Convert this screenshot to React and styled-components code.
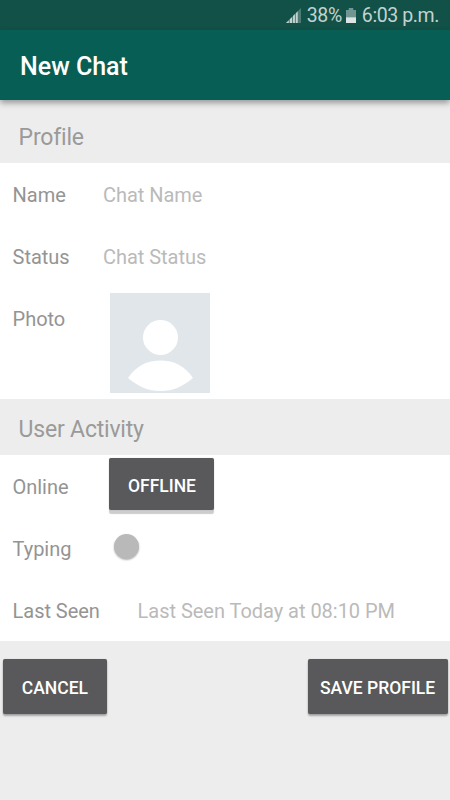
import React, { useState } from 'react';
import styled, { createGlobalStyle } from 'styled-components';

const GlobalStyle = createGlobalStyle`
  * {
    box-sizing: border-box;
  }
  body {
    margin: 0;
    background: #ededed;
    font-family: Roboto, sans-serif;
  }
`;

const Screen = styled.div`
  display: flex;
  flex-direction: column;
  height: 800px;
  background: #ededed;
  overflow: hidden;
`;

const StatusBar = styled.div`
  display: flex;
  flex: none;
  align-items: center;
  justify-content: flex-end;
  height: 30px;
  padding: 1px 11px 0 0;
  background: #125147;
  color: #c3d3d0;
  font-size: 19.5px;
  letter-spacing: -0.4px;
  line-height: 30px;
`;

const SignalIcon = styled.svg`
  width: 15px;
  height: 15px;
  margin-right: 6px;
`;

const BatteryIcon = styled.svg`
  width: 10px;
  height: 15px;
  margin: 0 6px 0 4px;
`;

const Toolbar = styled.header`
  position: relative;
  display: flex;
  flex: none;
  align-items: center;
  height: 70px;
  padding: 3px 20px 0;
  background: #075e54;
  box-shadow: 0 3px 6px rgba(0, 0, 0, 0.36);
  color: #fff;
  font-size: 25px;
  font-weight: 500;
`;

const SectionTitle = styled.h2`
  display: flex;
  flex: none;
  align-items: center;
  height: ${props => props.$height}px;
  margin: 0;
  padding: ${props => props.$top}px 0 0 18.6px;
  color: #9a9a9a;
  font-size: 23px;
  font-weight: 400;
  letter-spacing: -0.2px;
`;

const Panel = styled.section`
  flex: none;
  height: ${props => props.$height}px;
  padding-top: 1px;
  background: #fff;
`;

const Row = styled.div`
  display: flex;
  height: 62px;
`;

const Label = styled.label`
  flex: none;
  width: ${props => props.$width || 90.4}px;
  margin-left: 12.6px;
  color: #949494;
  font-size: 20px;
  letter-spacing: -0.05px;
  line-height: 62px;
`;

const Input = styled.input`
  flex: 1;
  min-width: 0;
  padding: 0;
  border: 0;
  outline: 0;
  background: transparent;
  color: #949494;
  font-family: inherit;
  font-size: 20px;
  letter-spacing: -0.03px;

  &::placeholder {
    color: #bababa;
    opacity: 1;
  }
`;

const Avatar = styled.svg`
  width: 100px;
  height: 100px;
  margin: 5px 0 0 7px;
`;

const Button = styled.button`
  width: ${props => props.$width}px;
  height: ${props => props.$height || 55}px;
  padding: 2px 0 0;
  border: 0;
  border-radius: 2px;
  background: #59595b;
  box-shadow: 0 2px 2px rgba(0, 0, 0, 0.3), 0 0 1px rgba(0, 0, 0, 0.3);
  color: #fff;
  font-family: inherit;
  font-size: 17.5px;
  font-weight: 500;
  white-space: nowrap;
`;

const OnlineButton = styled(Button)`
  margin: 2px 0 0 6.5px;
  padding-top: 4px;
  box-shadow: 0 4px 1px rgba(0, 0, 0, 0.2), 0 0 1px rgba(0, 0, 0, 0.3);
`;

const Toggle = styled.button`
  width: 25px;
  height: 25px;
  margin: 16px 0 0 10.8px;
  padding: 0;
  border: 0;
  border-radius: 50%;
  background: #b9b9b9;
  box-shadow: 0 1px 2px rgba(0, 0, 0, 0.3);
`;

const Actions = styled.footer`
  display: flex;
  justify-content: space-between;
  padding: 18.4px 2.5px 0;
`;

export default function App() {
  const [name, setName] = useState('');
  const [status, setStatus] = useState('');
  const [lastSeen, setLastSeen] = useState('');
  const [online, setOnline] = useState(false);

  return (
    <Screen>
      <GlobalStyle />
      <StatusBar>
        <SignalIcon viewBox="0 0 16 16">
          <path d="M0 16 L16 0 V16 Z" fill="#4c7c74" />
          <path d="M0 16 L3 13 V16 Z M4 16 V12 L6.500 9.500 V16 Z M7.500 16 V8.500 L9.500 6.500 V16 Z M10.500 16 V5.500 L12.500 3.500 V16 Z" fill="#c3d3d0" />
        </SignalIcon>
        <span>38%</span>
        <BatteryIcon viewBox="0 0 11 16" preserveAspectRatio="none">
          <path d="M3 0 H8 V2 H11 V16 H0 V2 H3 Z" fill="#6f9690" />
          <path d="M0 10 H11 V16 H0 Z" fill="#dde5e4" />
        </BatteryIcon>
        <span>6:03 p.m.</span>
      </StatusBar>
      <Toolbar>New Chat</Toolbar>

      <SectionTitle $height={63} $top={11}>Profile</SectionTitle>
      <Panel $height={236.4}>
        <Row>
          <Label htmlFor="name">Name</Label>
          <Input id="name" placeholder="Chat Name" value={name} onChange={e => setName(e.target.value)} />
        </Row>
        <Row>
          <Label htmlFor="status">Status</Label>
          <Input id="status" placeholder="Chat Status" value={status} onChange={e => setStatus(e.target.value)} />
        </Row>
        <Row>
          <Label as="span">Photo</Label>
          <Avatar viewBox="0 0 100 100">
            <rect width="100" height="100" fill="#e0e6e9" />
            <circle cx="50.5" cy="44.5" r="17.5" fill="#fff" />
            <path d="M18 85 C26 73 37 67.5 50.5 67.5 C64 67.5 75 73 83 85 C73 93.500 63 98 50.500 98 C38 98 28 93.500 18 85 Z" fill="#fff" />
          </Avatar>
        </Row>
      </Panel>

      <SectionTitle $height={55.6} $top={4}>User Activity</SectionTitle>
      <Panel $height={186}>
        <Row>
          <Label as="span">Online</Label>
          <OnlineButton $width={105} $height={52} onClick={() => setOnline(!online)}>
            {online ? 'ONLINE' : 'OFFLINE'}
          </OnlineButton>
        </Row>
        <Row>
          <Label as="span">Typing</Label>
          <Toggle aria-label="Typing" />
        </Row>
        <Row>
          <Label htmlFor="seen" $width={125}>Last Seen</Label>
          <Input id="seen" placeholder="Last Seen Today at 08:10 PM" value={lastSeen} onChange={e => setLastSeen(e.target.value)} />
        </Row>
      </Panel>

      <Actions>
        <Button $width={104.8}>CANCEL</Button>
        <Button $width={139.8}>SAVE PROFILE</Button>
      </Actions>
    </Screen>
  );
}
